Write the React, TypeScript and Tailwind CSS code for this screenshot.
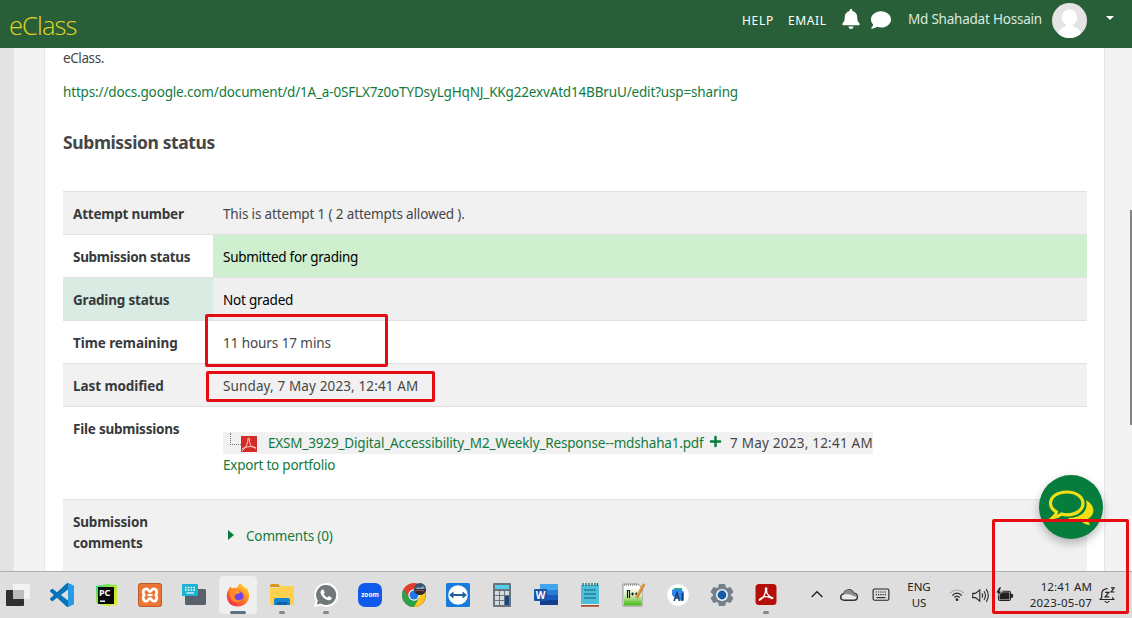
import React from "react";
import { FaBell, FaComment, FaPlus } from "react-icons/fa";

type Kids = { children: React.ReactNode };

function Svg({ children, className = "size-6" }: Kids & { className?: string }) {
  return (
    <svg viewBox="0 0 24 24" className={`${className} block shrink-0`} fill="none">
      {children}
    </svg>
  );
}

function Slot({ children, state = "idle" }: Kids & { state?: "idle" | "open" | "active" }) {
  return (
    <div className="flex h-[46px] w-11 shrink-0 flex-col items-center pt-1">
      <div
        className={
          state === "active"
            ? "flex h-[38px] w-[38px] flex-col items-center rounded border border-[#eeeeee] bg-[#efefef] pt-[6px]"
            : "flex h-[38px] w-[38px] flex-col items-center pt-[7px]"
        }
      >
        {children}
        {state === "active" && <span className="mt-[4px] h-[3px] w-4 shrink-0 rounded-full bg-[#5b7384]" />}
        {state === "open" && <span className="mt-[4px] h-[3px] w-1.5 shrink-0 rounded-full bg-[#858585]" />}
      </div>
    </div>
  );
}

function Header() {
  return (
    <header className="flex h-12 shrink-0 items-start bg-[#285f39] text-white">
      <div className="w-[742px] pl-[9px] pt-[7px] text-[25.5px] leading-[36px] font-light tracking-[-0.9px] text-[#e3d51e] font-['Open_Sans',sans-serif]">
        eClass
      </div>
      <span className="w-[46px] pt-[11px] text-[12px] leading-5 tracking-[0.7px]">HELP</span>
      <span className="w-[53px] pt-[11px] text-[12px] leading-5 tracking-[0.6px]">EMAIL</span>
      <FaBell className="mt-[9px] h-5 w-5" />
      <FaComment className="mt-[10px] ml-[10px] h-5 w-5" />
      <span className="ml-[17px] w-[144px] pt-[9px] text-[13.5px] leading-5 tracking-[-0.22px] whitespace-nowrap text-[#dde8df]">
        Md Shahadat Hossain
      </span>
      <svg viewBox="0 0 36 36" className="mt-[2px] size-9 shrink-0">
        <defs>
          <clipPath id="avatar">
            <circle cx="17.500" cy="18.500" r="17.5" />
          </clipPath>
        </defs>
        <g clipPath="url(#avatar)">
          <rect width="36" height="36" fill="#e4e4e4" />
          <ellipse cx="17.500" cy="15.500" rx="7.800" ry="8.200" fill="#fff" />
          <path d="M14 20H21V24.500C26 25.500 30 29.500 31 36H4.500C5.500 29.500 9.500 25.500 14 24.500Z" fill="#fff" />
        </g>
      </svg>
      <svg viewBox="0 0 8 4" className="mt-[16px] ml-[18px] h-1 w-2">
        <path d="M0 0H8L4 4Z" fill="#fff" />
      </svg>
    </header>
  );
}

function Row({
  label,
  children,
  row = "bg-white",
  head = "tracking-[-0.2px]",
  cell = "text-[#464646]",
}: Kids & { label: string; row?: string; head?: string; cell?: string }) {
  return (
    <div className={`flex h-[43px] border-t border-[#dfe1e3] ${row}`}>
      <div className={`w-[150px] pt-[12px] pl-[10px] font-bold text-[#373a3c] ${head}`}>{label}</div>
      <div className={`flex-1 pt-[12px] pl-[10px] ${cell}`}>{children}</div>
    </div>
  );
}

function Content() {
  return (
    <main className="flex h-[523px] shrink-0 overflow-hidden bg-[#f3f3f3]">
      <div className="w-[14px] bg-[#e3e3e3]" />
      <section className="ml-[30px] w-[1061px] border-x border-[#e6e6e6] bg-white pr-[17px] pl-[18px] text-[13.5px] leading-[21px] whitespace-nowrap text-[#464646]">
        <p className="h-[34px] tracking-[-0.4px]">eClass.</p>
        <p className="h-[47px] tracking-[-0.16px] text-[#137a3d]">
          https://docs.google.com/document/d/1A_a-0SFLX7z0oTYDsyLgHqNJ_KKg22exvAtd14BBruU/edit?usp=sharing
        </p>
        <h3 className="h-[62px] text-[17.5px] leading-[27px] font-bold tracking-[-0.4px] text-[#464646]">Submission status</h3>
        <div>
          <Row label="Attempt number" row="bg-[#f1f1f1]" cell="tracking-[-0.15px] text-[#464646]">
            This is attempt 1 ( 2 attempts allowed ).
          </Row>
          <Row label="Submission status" head="tracking-[-0.3px]" cell="bg-[#cfefcf] tracking-[-0.28px] text-black">
            Submitted for grading
          </Row>
          <Row label="Grading status" row="bg-[#efefef]" head="bg-[#daebe3] tracking-[-0.2px]" cell="tracking-[-0.2px] text-black">
            Not graded
          </Row>
          <Row label="Time remaining" head="tracking-[-0.08px]" cell="tracking-[-0.08px] text-[#464646]">
            11 hours 17 mins
          </Row>
          <Row label="Last modified" row="bg-[#f1f1f1]" head="tracking-[-0.08px]" cell="tracking-[0.13px] text-[#464646]">
            Sunday, 7 May 2023, 12:41 AM
          </Row>
          <div className="flex h-[93px] border-t border-[#dfe1e3]">
            <div className="w-[150px] pt-[12px] pl-[10px] font-bold tracking-[-0.22px] text-[#373a3c]">File submissions</div>
            <div className="pt-[25px] pl-[10px]">
              <div className="flex h-[22px] w-[650px] items-center bg-[#f1f1f1]">
                <div className="mb-[9px] ml-[7px] h-[12px] w-[11px] border-b border-l border-dotted border-[#777]" />
                <svg viewBox="0 0 16 16" className="mt-[2px] h-4 w-4">
                  <rect width="16" height="16" fill="#d52b27" />
                  <path d="M1 15C5 12 7 7 7 3C7 1.500 9 1.500 8.500 4C8 8 11 12 15 12C11 9.500 5 10.500 1 13" fill="none" stroke="#f7d2cc" strokeWidth="1" />
                </svg>
                <span className="ml-[11px] w-[441px] tracking-[-0.165px] text-[#137a3d]">
                  EXSM_3929_Digital_Accessibility_M2_Weekly_Response--mdshaha1.pdf
                </span>
                <FaPlus className="mb-[3px] size-[13px] text-[#0a7d3c]" />
                <span className="ml-[8px] tracking-[0.23px]">7 May 2023, 12:41 AM</span>
              </div>
              <div className="pt-px tracking-[-0.23px] text-[#137a3d]">Export to portfolio</div>
            </div>
          </div>
          <div className="flex h-[80px] border-t border-[#dfe1e3] bg-[#f1f1f1]">
            <div className="w-[150px] pt-[12px] pl-[10px] font-bold tracking-[-0.2px] text-[#373a3c]">
              Submission
              <br />
              comments
            </div>
            <div className="flex items-start pt-[26px] pl-[15px] text-[#137a3d]">
              <svg viewBox="0 0 6 10" className="mt-[4px] h-[10px] w-[6px]">
                <path d="M0 0L6 5L0 10Z" fill="#087d3e" />
              </svg>
              <span className="ml-[12px] tracking-[-0.16px]">Comments (0)</span>
            </div>
          </div>
        </div>
      </section>
    </main>
  );
}

function AppIcons() {
  return (
    <div className="-ml-[4px] flex">
      <Slot>
        <Svg>
          <rect x="0" y="7" width="18" height="16" rx="1" fill="#303030" />
          <rect x="7" y="1" width="17" height="15" rx="1" fill="#f2f2f2" />
          <rect x="7" y="7" width="11" height="9" fill="#bcbcbc" />
        </Svg>
      </Slot>
      <Slot>
        <Svg>
          <path
            d="M23.15 2.587L18.21.21a1.494 1.494 0 0 0-1.705.29l-9.46 8.63-4.12-3.128a.999.999 0 0 0-1.276.057L.327 7.261A1 1 0 0 0 .326 8.74L3.899 12 .326 15.26a1 1 0 0 0 .001 1.479L1.65 17.94a.999.999 0 0 0 1.276.057l4.12-3.128 9.46 8.63a1.492 1.492 0 0 0 1.704.29l4.942-2.377A1.5 1.5 0 0 0 24 20.06V3.939a1.5 1.5 0 0 0-.85-1.352zm-5.146 14.861L10.826 12l7.178-5.448v10.896z"
            fill="#0873b9"
          />
          <path d="M18 .2L23.200 2.600Q24 3 24 4V20Q24 21 23.200 21.400L18 23.800Z" fill="#279be5" />
        </Svg>
      </Slot>
      <Slot>
        <Svg>
          <defs>
            <linearGradient id="pc" x1="0" y1="0" x2="1" y2="1">
              <stop stopColor="#21d789" />
              <stop offset=".45" stopColor="#a5e83a" />
              <stop offset="1" stopColor="#e7ec28" />
            </linearGradient>
          </defs>
          <path d="M2 3L14 1L23 2V22L12 23L2 20Z" fill="url(#pc)" />
          <rect x="4" y="4" width="16" height="17" fill="#080808" />
          <rect x="6" y="17.500" width="5" height="1.400" fill="#fff" />
          <text x="5" y="13" fill="#fff" className="text-[9px] font-bold">PC</text>
        </Svg>
      </Slot>
      <Slot>
        <Svg>
          <rect x=".5" y=".5" width="23" height="23" rx="2" fill="#ea7632" stroke="#b95b2b" />
          <path
            d="M8.500 5.800C5.500 5.800 4 9 6.200 12C4 15 5.500 18.200 8.500 18.200C10.500 18.200 10 15.500 12 15.500S13.500 18.200 15.500 18.200C18.500 18.200 20 15 17.800 12C20 9 18.500 5.800 15.500 5.800C13.500 5.800 14 8.500 12 8.500S10.500 5.800 8.500 5.800Z"
            stroke="#fff"
            strokeWidth="2.800"
          />
          <path d="M9.500 12H14.500" stroke="#fff" strokeWidth="2.200" />
        </Svg>
      </Slot>
      <Slot>
        <Svg>
          <rect x="3" y="6" width="21" height="16" rx="1.200" fill="#59616b" />
          <rect x="0" y="1" width="16" height="12" rx="1" fill="#1cb2d5" />
          <path d="M3 4.500H14M3 7H14" stroke="#fff" strokeWidth="1.300" strokeDasharray="1.600 1.200" />
          <path d="M4.500 10H12" stroke="#fff" strokeWidth="1.200" />
        </Svg>
      </Slot>
      <Slot state="active">
        <Svg>
          <defs>
            <linearGradient id="fx" x1="1" y1="0" x2=".2" y2="1">
              <stop stopColor="#fff044" />
              <stop offset=".4" stopColor="#ff9a20" />
              <stop offset="1" stopColor="#f6234e" />
            </linearGradient>
          </defs>
          <path d="M14 0C16 3 18 3 20 6L20.500 4.500C22 7 23.500 10 23 14C22 20 17.500 23.500 12 23.500C5 23.500 0.500 19 .8 12C1 9 2 7.500 3 6L4 3.500L6 5.500Q9 4.500 11 5Q12 2 14 0Z" fill="url(#fx)" />
          <circle cx="12" cy="13.500" r="5.600" fill="#7542e4" />
          <path d="M3 8C5 5 9 5 11 8L14 9L10.500 11C8 12 8 16 11 17C14 18 16 16 17 15C16 21 6 21 4.500 14Z" fill="#ff8a20" />
          <path d="M11 8L15 9L11 11L8 9Z" fill="#ffa52b" />
        </Svg>
      </Slot>
      <Slot state="open">
        <Svg>
          <path d="M0 3Q0 1 2 1H8L11 4H0Z" fill="#d79511" />
          <path d="M0 5H7L10 3H23Q24 3 24 4V21Q24 22 23 22H1Q0 22 0 21Z" fill="#fcd150" />
          <path d="M4 22V17Q4 15 6 15H18Q20 15 20 17V22Z" fill="#1683cf" />
          <path d="M7 19H17V22H7Z" fill="#0f60a7" />
        </Svg>
      </Slot>
      <Slot state="open">
        <Svg>
          <path d="M12 0A12 12 0 1 1 6.500 22.500L0 24L1.600 17.800A12 12 0 0 1 12 0Z" fill="#fff" />
          <path d="M12 2A10 10 0 1 1 6.800 20.400L2.800 21.400L3.800 17.500A10 10 0 0 1 12 2Z" fill="#70787a" />
          <path
            d="M8 6.800C8.500 6.400 9.300 6.400 9.600 7L10.600 9.300C10.800 9.800 10.300 10.400 9.700 11C10.600 12.700 11.800 13.800 13.500 14.500C14.200 13.800 14.600 13 15.200 13.300L17.400 14.400C18 14.800 17.800 15.700 17.300 16.300C16.500 17.200 15 17.600 13.500 17.100C10.300 16 8 13.800 6.800 10.800C6.200 9.200 6.800 7.800 8 6.800Z"
            fill="#fff"
          />
        </Svg>
      </Slot>
      <Slot>
        <Svg>
          <rect width="24" height="24" rx="7" fill="#1059ed" />
          <text x="12" y="14" textAnchor="middle" fill="#fff" className="text-[6.5px] font-bold">zoom</text>
        </Svg>
      </Slot>
      <Slot>
        <Svg>
          <circle cx="12" cy="12" r="12" fill="#e33b2e" />
          <path d="M1.600 6A12 12 0 0 0 12 24L17 15L7 15Z" fill="#2ba24c" />
          <path d="M12 24A12 12 0 0 0 22.500 7H12L17 15Z" fill="#fbc916" />
          <circle cx="12" cy="12" r="5.700" fill="#fff" />
          <circle cx="12" cy="12" r="4.500" fill="#2378e8" />
          <circle cx="18" cy="6" r="6" fill="#38546c" />
          <path d="M12 6H24A6 6 0 0 1 12 6Z" fill="#302a31" />
          <path d="M13 6L16 4L18 5L21 3L23 6Z" fill="#83a8c0" />
          <path d="M13 8L17 7L22 8" stroke="#ad5645" />
        </Svg>
      </Slot>
      <Slot>
        <Svg>
          <rect width="24" height="24" rx="1.500" fill="#177bdc" />
          <circle cx="12" cy="12" r="9.800" fill="#fff" />
          <path d="M3 12L7.500 8.500V11H16.500V8.500L21 12L16.500 15.500V13H7.500V15.500Z" fill="#1d5f9f" />
        </Svg>
      </Slot>
      <Slot>
        <Svg>
          <rect x="3" y="0" width="18" height="24" rx="1" fill="#69757e" />
          <rect x="5" y="2" width="14" height="4" fill="#55cce8" />
          <path d="M5 8H9V12H5ZM10 8H14V12H10ZM15 8H19V12H15ZM5 13H9V17H5ZM10 13H14V17H10ZM5 18H9V22H5ZM10 18H14V22H10Z" fill="#d5dce0" />
          <rect x="15" y="13" width="4" height="9" fill="#174780" />
        </Svg>
      </Slot>
      <Slot>
        <Svg>
          <rect x="6" y="1" width="18" height="6" fill="#41a5ee" />
          <rect x="6" y="7" width="18" height="5" fill="#2b7cd3" />
          <rect x="6" y="12" width="18" height="5" fill="#185abd" />
          <rect x="6" y="17" width="18" height="5" fill="#103f91" />
          <rect x="0" y="6" width="13" height="12" rx="1" fill="#1c53a7" />
          <text x="6.500" y="15.500" textAnchor="middle" fill="#fff" className="text-[10px] font-bold">W</text>
        </Svg>
      </Slot>
      <Slot>
        <Svg>
          <rect x="3" y="2" width="18" height="19" rx="1" fill="#4bbfd7" />
          <path d="M5 0V3M8 0V3M11 0V3M14 0V3M17 0V3M19.500 0V3" stroke="#176377" strokeWidth="1.300" />
          <path d="M6 7H18M6 11H18M6 15H18" stroke="#155f76" strokeWidth="1.200" />
          <rect x="3" y="21" width="18" height="1" fill="#e7f4f5" />
          <rect x="3" y="22" width="18" height="1.700" fill="#a44b20" />
        </Svg>
      </Slot>
      <Slot>
        <Svg>
          <defs>
            <linearGradient id="np" x1="0" y1="0" x2="0" y2="1">
              <stop stopColor="#f7fbf0" />
              <stop offset=".4" stopColor="#d5ecb4" />
              <stop offset="1" stopColor="#43b80f" />
            </linearGradient>
          </defs>
          <path d="M1 1H16L20 5V23H1Z" fill="#fff" stroke="#929292" />
          <path d="M2 6H19.500V22.500H2Z" fill="url(#np)" />
          <path d="M2 2H16" stroke="#555" strokeDasharray="1 1" />
          <path d="M5.500 15V7.500H7.500V15M9 11H12M10.500 9.500V12.500M13 11H16M14.500 9.500V12.500" stroke="#152015" strokeWidth="1.200" />
          <path d="M22 1L14.500 15" stroke="#d38632" strokeWidth="3" />
          <path d="M21 1L13.500 15" stroke="#efb65f" strokeWidth="1" />
        </Svg>
      </Slot>
      <Slot>
        <Svg>
          <circle cx="12" cy="12" r="10.800" fill="#fff" />
          <path d="M8 5H16V9H8Z" fill="#21b779" />
          <path d="M6 6.500H15L18 9V17.500H14L12.500 14H8L6 12Z" fill="#3386f2" />
          <path d="M8 18L11 9.500L13.500 18M9 15H13" stroke="#12386b" strokeWidth="1.400" />
          <path d="M16.300 10V18" stroke="#12386b" strokeWidth="1.400" />
        </Svg>
      </Slot>
      <Slot>
        <Svg>
          <path d="M9 1H15L16 4.500L17 5L20.500 4L23.500 9L21 11.500V12.500L23.500 15L20.500 20L17 19L16 19.500L15 23H9L8 19.500L7 19L3.500 20L.5 15L3 12.500V11.500L.5 9L3.500 4L7 5L8 4.500Z" fill="#75808a" />
          <circle cx="12" cy="12" r="6" fill="#f1f3f5" />
          <circle cx="12" cy="12" r="4.400" fill="#155ba6" />
        </Svg>
      </Slot>
      <Slot state="open">
        <Svg>
          <rect x="1.500" y="1" width="21" height="21" rx="3.500" fill="#b40e0b" />
          <path d="M6 17C10 15 12 9 11.500 6C11.300 4.500 13 4.500 12.700 6.500C12 10 14.500 13.500 18 14.500C20 15 18 16.200 16 14.800C13 13 9 14 6.500 15.500C5 16.500 5 17.800 6 17Z" stroke="#fff" strokeWidth="1.300" strokeLinejoin="round" />
        </Svg>
      </Slot>
    </div>
  );
}

function Tray() {
  return (
    <div className="ml-[17px] flex h-[46px] items-center text-[#222]">
      <Svg className="mr-[15px] ml-[4px] size-4">
        <path d="M4 15L12 7L20 15" stroke="#202020" strokeWidth="2" />
      </Svg>
      <Svg className="mr-[14px] size-[18px]">
        <path d="M5.500 19C-1 19 0 11 5 10.500C7 4 15 3 18 9.500C25 10 24.500 19 18.500 19Z" fill="#e8e8e8" stroke="#333" strokeWidth="1.900" />
        <path d="M5 10.500C7 4 15 3 18 9.500C21 10 22 12 22 14.500L12 11Z" fill="#8c8c8c" />
      </Svg>
      <Svg className="size-[18px]">
        <rect x="1.500" y="4" width="21" height="15" rx="2" stroke="#222" strokeWidth="1.500" />
        <path d="M5 8H19M5 11.500H19" stroke="#222" strokeWidth="1.500" strokeDasharray="1.600 1.400" />
        <path d="M6 15.500H18" stroke="#222" strokeWidth="1.500" />
      </Svg>
      <div className="ml-[12px] w-[34px] text-center text-[11.5px] leading-4">
        ENG
        <br />
        US
      </div>
      <Svg className="ml-[13px] size-4">
        <path d="M2 9C8 3 16 3 22 9" stroke="#aaa" strokeWidth="1.600" />
        <path d="M5 13C9 8 15 8 19 13M8 16C10 13 14 13 16 16" stroke="#222" strokeWidth="1.700" />
        <circle cx="12" cy="19" r="2" fill="#222" />
      </Svg>
      <Svg className="ml-[7px] size-[17px]">
        <path d="M1 9H5L11 4V20L5 15H1ZM14 9Q16 12 14 15M17 6Q21 12 17 18M20 3Q26 12 20 21" stroke="#222" strokeWidth="1.500" />
      </Svg>
      <Svg className="ml-[7px] size-[17px]">
        <rect x="3.500" y="6" width="17" height="13" rx="2.500" stroke="#202020" strokeWidth="1.500" />
        <rect x="5" y="7.500" width="14" height="10" rx="1" fill="#202020" />
        <path d="M21 10H24V15H21Z" fill="#202020" />
        <path d="M4.500 0L-.5 8.500H3L1 14.500L9 6H5.500L8 0Z" fill="#202020" stroke="#dedede" strokeWidth="1.200" />
      </Svg>
      <div className="w-[79px] text-right text-[11.5px] leading-4 tracking-[0.15px] whitespace-nowrap">
        12:41 AM
        <br />
        <span className="tracking-[0.22px]">2023-05-07</span>
      </div>
      <Svg className="ml-[6px] size-[18px]">
        <path d="M13 3.500C7 3.500 5 7 5 11V15L3 18H21L19 15M9 20Q12 24 15 20" stroke="#222" strokeWidth="1.600" />
        <path d="M9.500 8.500H14.500L9.500 14.500H15M17.500 2.500H21.500L17.500 8H22" stroke="#222" strokeWidth="1.600" />
      </Svg>
    </div>
  );
}

export default function App() {
  return (
    <div className="relative flex h-[618px] w-[1132px] flex-col overflow-hidden bg-white font-['Noto_Sans','Open_Sans',sans-serif]">
      <Header />
      <Content />
      <footer className="flex h-[47px] shrink-0 border-t border-[#aeb0b0] bg-[#dedede]">
        <AppIcons />
        <Tray />
      </footer>

      <div className="absolute top-[210px] right-0 h-[215px] w-[2px] bg-[#858585]" />
      <div className="absolute top-[475px] left-[1039px] size-16 rounded-full bg-[#067d3d] shadow-[0_4px_10px_rgba(0,0,0,0.28)]">
        <svg viewBox="0 0 64 64" className="size-16" fill="none">
          <path d="M47 25C57 31 56 40 49 44Q49 47 51 50Q46 50 42 46Q34 48 29 43C42 43 50 36 47 25Z" fill="#f4df16" />
          <path
            d="M28 17C18 17 11.500 22 11.500 28.500C11.500 32 14 35 17.500 37Q17 40 14 42.500Q19 42 22.500 39Q25 39.800 28 39.800C38 39.800 44 34.500 44 28.500S38 17 28 17Z"
            stroke="#f4df16"
            strokeWidth="3.200"
          />
        </svg>
      </div>
      <div className="absolute top-[314px] left-[205px] h-[53px] w-[183px] rounded-[2px] border-3 border-[#e60d12]" />
      <div className="absolute top-[371px] left-[206px] h-[31px] w-[229px] rounded-[2px] border-3 border-[#e60d12]" />
      <div className="absolute top-[519px] left-[992px] h-[95px] w-[137px] rounded-[2px] border-3 border-[#e60d12]" />
    </div>
  );
}
